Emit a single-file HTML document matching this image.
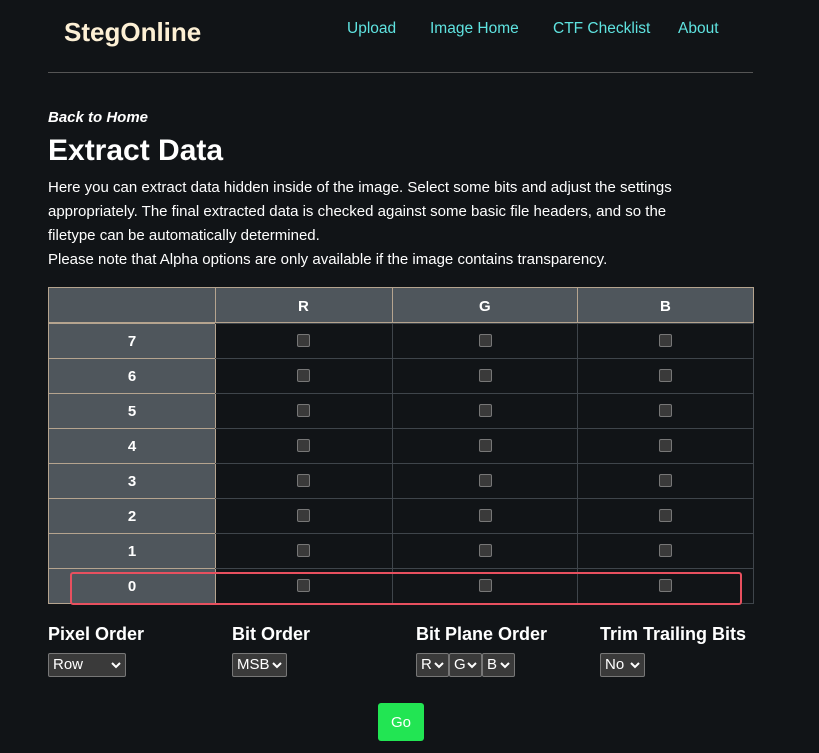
<!DOCTYPE html>
<html><head><meta charset="utf-8"><style>
*{margin:0;padding:0;box-sizing:border-box}
body{width:819px;height:753px;background:#111417;color:#fff;font-family:"Liberation Sans",sans-serif;position:relative;overflow:hidden}
.a{position:absolute;white-space:nowrap}
.nav{color:#5fe3e0;font-size:15.5px;top:20px}
.cell{position:absolute;height:35px}
.lab{background:#4f565c;border:1px solid #b5a48f;font-weight:bold;font-size:15px;text-align:center;line-height:36px}
.cb{position:absolute;width:13px;height:13px;border:1px solid #777;border-radius:2px;background:#3a3a3a}
.h{font-weight:bold;font-size:18px;top:624px}
.sel{position:absolute;top:653px;height:24px;border:1px solid #777;border-radius:2px;background:#3a3a3a;font-size:15px;line-height:22px;padding-left:4px}
.sel svg{position:absolute;right:4px;top:8px}
</style></head><body>
<div class="a" style="left:64px;top:17px;font-size:26px;font-weight:bold;color:#fdf0d5">StegOnline</div>
<div class="a nav" style="left:347px">Upload</div>
<div class="a nav" style="left:430px">Image Home</div>
<div class="a nav" style="left:553px">CTF Checklist</div>
<div class="a nav" style="left:678px">About</div>
<div class="a" style="left:48px;top:72px;width:705px;height:1px;background:#555"></div>
<div class="a" style="left:48px;top:109px;font-size:15px;font-weight:bold;font-style:italic">Back to Home</div>
<div class="a" style="left:48px;top:134px;font-size:30px;font-weight:bold">Extract Data</div>
<div class="a" style="left:48px;top:176px;font-size:15px;line-height:24px;white-space:normal;width:660px">Here you can extract data hidden inside of the image. Select some bits and adjust the settings appropriately. The final extracted data is checked against some basic file headers, and so the filetype can be automatically determined.<br>Please note that Alpha options are only available if the image contains transparency.</div>
<div class="cell" style="left:48px;top:287px;width:706px;height:37px;background:#4f565c;border:1px solid #b5a48f;border-bottom:2px solid #b5a48f"></div>
<div class="a" style="left:215px;top:288px;width:1px;height:35px;background:#b5a48f"></div>
<div class="a" style="left:392px;top:288px;width:1px;height:35px;background:#b5a48f"></div>
<div class="a" style="left:577px;top:288px;width:1px;height:35px;background:#b5a48f"></div>
<div class="a" style="left:298px;top:298px;font-weight:bold;font-size:15px">R</div>
<div class="a" style="left:479px;top:298px;font-weight:bold;font-size:15px">G</div>
<div class="a" style="left:660px;top:298px;font-weight:bold;font-size:15px">B</div>
<div id="rows"></div>
<script>
var h='';
for(var i=0;i<8;i++){var t=323+35*i,n=7-i;
h+='<div class="cell lab" style="left:48px;top:'+t+'px;width:168px;height:36px">'+n+'</div>';
h+='<div class="cell" style="left:215px;top:'+t+'px;width:539px;height:36px;border:1px solid #3f454b;border-left:none"></div>';
h+='<div class="a" style="left:392px;top:'+t+'px;width:1px;height:35px;background:#3f454b"></div>';
h+='<div class="a" style="left:577px;top:'+t+'px;width:1px;height:35px;background:#3f454b"></div>';
[297,479,659].forEach(function(x){h+='<div class="cb" style="left:'+x+'px;top:'+(t+11)+'px"></div>'});}
document.getElementById('rows').innerHTML=h;
</script>
<div class="a" style="left:70px;top:572px;width:672px;height:33px;border:2px solid #e8505f;border-radius:3px"></div>
<div class="a h" style="left:48px">Pixel Order</div>
<div class="a h" style="left:232px">Bit Order</div>
<div class="a h" style="left:416px">Bit Plane Order</div>
<div class="a h" style="left:600px">Trim Trailing Bits</div>
<div class="sel" style="left:48px;width:78px">Row<svg width="10" height="7"><path d="M1 1l4 4 4-4" stroke="#fff" stroke-width="2" fill="none"/></svg></div>
<div class="sel" style="left:232px;width:55px">MSB<svg width="10" height="7"><path d="M1 1l4 4 4-4" stroke="#fff" stroke-width="2" fill="none"/></svg></div>
<div class="sel" style="left:416px;width:33px">R<svg width="10" height="7"><path d="M1 1l4 4 4-4" stroke="#fff" stroke-width="2" fill="none"/></svg></div>
<div class="sel" style="left:449px;width:33px">G<svg width="10" height="7"><path d="M1 1l4 4 4-4" stroke="#fff" stroke-width="2" fill="none"/></svg></div>
<div class="sel" style="left:482px;width:33px">B<svg width="10" height="7"><path d="M1 1l4 4 4-4" stroke="#fff" stroke-width="2" fill="none"/></svg></div>
<div class="sel" style="left:600px;width:45px">No<svg width="10" height="7"><path d="M1 1l4 4 4-4" stroke="#fff" stroke-width="2" fill="none"/></svg></div>
<div class="a" style="left:378px;top:703px;width:46px;height:38px;background:#22e553;border-radius:3px;font-size:15px;line-height:40px;text-align:center">Go</div>
</body></html>
